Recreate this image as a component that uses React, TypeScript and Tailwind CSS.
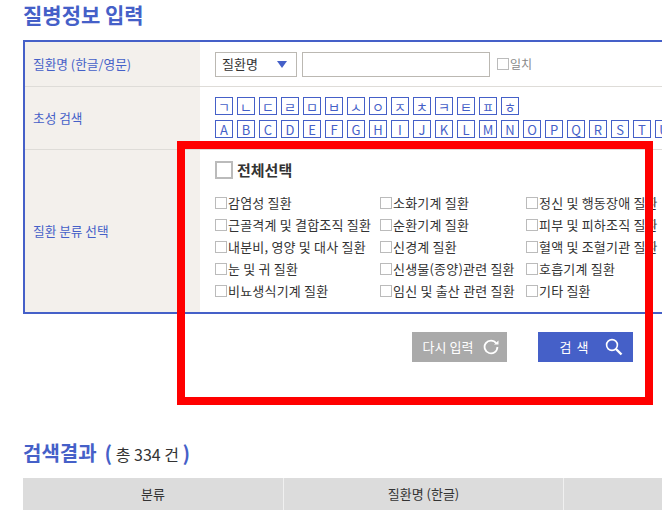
import React from 'react';

const FONT = "font-['Noto_Sans_CJK_KR','Liberation_Sans',sans-serif]";

const consonants = ['ㄱ', 'ㄴ', 'ㄷ', 'ㄹ', 'ㅁ', 'ㅂ', 'ㅅ', 'ㅇ', 'ㅈ', 'ㅊ', 'ㅋ', 'ㅌ', 'ㅍ', 'ㅎ'];
const letters = 'ABCDEFGHIJKLMNOPQRSTUVWXYZ'.split('');

const columns = [
  { width: 'w-[165px]', items: ['감염성 질환', '근골격계 및 결합조직 질환', '내분비, 영양 및 대사 질환', '눈 및 귀 질환', '비뇨생식기계 질환'] },
  { width: 'w-[146px]', items: ['소화기계 질환', '순환기계 질환', '신경계 질환', '신생물(종양)관련 질환', '임신 및 출산 관련 질환'] },
  { width: 'w-[150px]', items: ['정신 및 행동장애 질환', '피부 및 피하조직 질환', '혈액 및 조혈기관 질환', '호흡기계 질환', '기타 질환'] },
];

function KeyBox({ label }: { label: string }) {
  return (
    <span className="flex h-[18px] w-[18px] shrink-0 items-center justify-center border border-[#4560c8] text-[13px] leading-none text-[#4560c8]">
      {label}
    </span>
  );
}

function Label({ children }: { children: React.ReactNode }) {
  return (
    <div className="flex w-[175px] shrink-0 items-center bg-[#f3f0ec] pb-[1px] pl-2 text-[12.7px] text-[#4560c8]">
      {children}
    </div>
  );
}

export default function App() {
  return (
    <div className={`${FONT} relative h-[511px] w-[662px] overflow-hidden bg-white`}>
      <div className="pl-[23px]">
        <h2 className="h-10 text-[21px] leading-[28px] font-bold text-[#4560c8]">질병정보 입력</h2>

        {/* search form */}
        <div className="w-[680px] border-2 border-[#4560c8]">
          <div className="flex h-[45px] border-b border-[#dedcd8]">
            <Label>질환명 (한글/영문)</Label>
            <div className="flex items-center pl-[15px]">
              <div className="flex h-[25px] w-[82px] items-center justify-between border border-[#bbb8b2] pr-[9px] pl-[6px] text-[13px] text-[#333]">
                <span>질환명</span>
                <svg width="10" height="7" viewBox="0 0 10 7">
                  <path d="M0 0h10L5 7z" fill="#4560c8" />
                </svg>
              </div>
              <div className="ml-[5px] h-[25px] w-[188px] border border-[#bbb8b2]" />
              <span className="ml-[7px] h-[12px] w-[12px] border border-[#bbb]" />
              <span className="ml-[1px] text-[12px] text-[#888]">일치</span>
            </div>
          </div>

          <div className="flex h-[63px] border-b border-[#dedcd8]">
            <Label>초성 검색</Label>
            <div className="flex flex-col gap-[5px] pt-[10px] pl-[15px]">
              <div className="flex gap-1">
                {consonants.map((c) => (
                  <KeyBox key={c} label={c} />
                ))}
              </div>
              <div className="flex gap-1">
                {letters.map((c) => (
                  <KeyBox key={c} label={c} />
                ))}
              </div>
            </div>
          </div>

          <div className="flex h-[162px]">
            <Label>질환 분류 선택</Label>
            <div className="pt-[11px] pl-[15px]">
              <div className="flex h-[18px] items-center">
                <span className="h-[18px] w-[18px] border-2 border-[#bbb]" />
                <span className="ml-1 text-[15px] font-bold text-[#333]">전체선택</span>
              </div>
              <div className="mt-[13px] flex">
                {columns.map((col) => (
                  <div key={col.items[0]} className={`${col.width} shrink-0`}>
                    {col.items.map((item) => (
                      <div key={item} className="flex h-[22px] items-center whitespace-nowrap text-[13px] tracking-[0.2px] text-[#333]">
                        <span className="h-[12px] w-[12px] shrink-0 border border-[#bbb]" />
                        <span className="ml-[1px]">{item}</span>
                      </div>
                    ))}
                  </div>
                ))}
              </div>
            </div>
          </div>
        </div>

        {/* buttons */}
        <div className="mt-[18px] flex h-[30px] pl-[389px]">
          <button className="flex w-[95px] items-center justify-center gap-[10px] bg-[#aaaaaa] pl-[3px] text-[13px] text-white">
            <span>다시 입력</span>
            <svg width="16" height="16" viewBox="0 0 16 16" fill="none">
              <path d="M13.2 4.2A6.4 6.4 0 1 0 14.4 8" stroke="white" strokeWidth="1.8" />
              <path d="M11 5.5h4.5V1.5z" fill="white" />
            </svg>
          </button>
          <button className="ml-[31px] flex w-[95px] items-center justify-center gap-[16px] bg-[#4560c8] pl-[12px] text-[13px] text-white">
            <span className="tracking-[1px]">검 색</span>
            <svg width="18" height="18" viewBox="0 0 18 18" fill="none">
              <circle cx="7" cy="7" r="5.4" stroke="white" strokeWidth="1.6" />
              <path d="M11 11l5.5 5.5" stroke="white" strokeWidth="2.4" />
            </svg>
          </button>
        </div>

        {/* results */}
        <h2 className="mt-[77px] flex h-[28px] items-center text-[20px] font-bold text-[#4560c8]">
          검색결과
          <span className="ml-[8px] text-[16px] font-normal text-[#333]">
            <b className="text-[20px] text-[#4560c8]">(</b> 총 334 건 <b className="text-[20px] text-[#4560c8]">)</b>
          </span>
        </h2>
        <div className="mt-[11px] flex h-8 w-[680px] bg-[#dcdcdc] text-[13px] text-[#333]">
          <div className="flex w-[261px] items-center justify-center border-r border-[#f0f0f0]">분류</div>
          <div className="flex w-[280px] items-center justify-center border-r border-[#f0f0f0]">질환명 (한글)</div>
          <div className="flex-1" />
        </div>
      </div>

      {/* red highlight drawn over the page */}
      <div className="absolute top-[141px] left-[177px] h-[264px] w-[476px] border-8 border-[#ff0000]" />
    </div>
  );
}
